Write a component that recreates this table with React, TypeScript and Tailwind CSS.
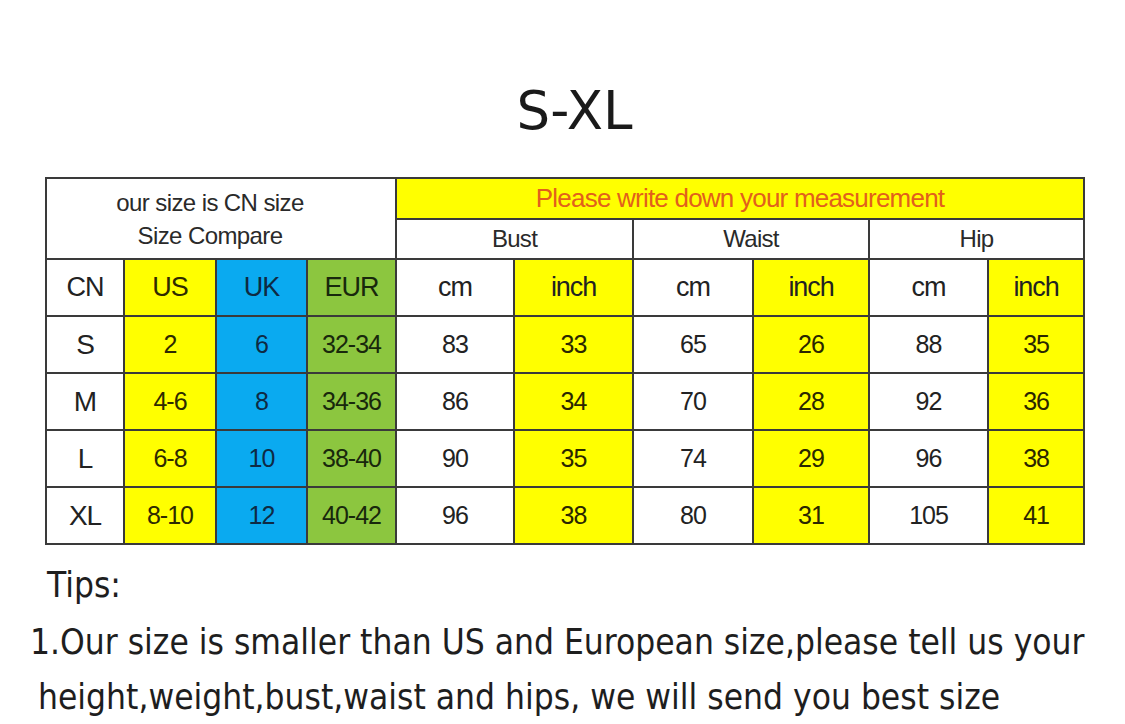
const sizeRows = [
  { cn: "S", us: "2", uk: "6", eur: "32-34", values: ["83", "33", "65", "26", "88", "35"] },
  { cn: "M", us: "4-6", uk: "8", eur: "34-36", values: ["86", "34", "70", "28", "92", "36"] },
  { cn: "L", us: "6-8", uk: "10", eur: "38-40", values: ["90", "35", "74", "29", "96", "38"] },
  { cn: "XL", us: "8-10", uk: "12", eur: "40-42", values: ["96", "38", "80", "31", "105", "41"] },
];

const colWidths = [78, 92, 91, 89, 118, 119, 120, 116, 119, 96];

const cell = "border-2 border-[#3a3a3a] p-0 text-center align-middle";

export default function App() {
  return (
    <div className="min-h-screen w-[1125px] bg-white text-[#222]">
      <h1
        className="pt-[81px] pl-[24px] text-center text-[53px] leading-[60px] font-normal text-[#1a1a1a]"
        style={{ fontFamily: '"DejaVu Sans", sans-serif' }}
      >
        S-XL
      </h1>

      <div className="ml-[45px] mt-[36px]" style={{ fontFamily: '"Liberation Sans", Arial, sans-serif' }}>
        <table className="table-fixed border-collapse w-[1038px]">
          <colgroup>
            {colWidths.map((w, i) => (
              <col key={i} style={{ width: w }} />
            ))}
          </colgroup>
          <tbody>
            <tr className="h-[40px]">
              <td className={`${cell} bg-white`} colSpan={4} rowSpan={2}>
                <div className="pr-[22px] text-[24px] leading-[33px] tracking-[-0.025em] text-[#2a2a2a]">
                  <div>our size is CN size</div>
                  <div>Size Compare</div>
                </div>
              </td>
              <td className={`${cell} bg-[#ffff00] text-[26px] tracking-[-0.03em] text-[#e2601c]`} colSpan={6}>
                Please write down your measurement
              </td>
            </tr>
            <tr className="h-[40px]">
              {["Bust", "Waist", "Hip"].map((label) => (
                <td key={label} className={`${cell} bg-white text-[24px] tracking-[-0.03em] text-[#2a2a2a]`} colSpan={2}>
                  {label}
                </td>
              ))}
            </tr>
            <tr className="h-[57px] text-[27px] tracking-[-0.04em]">
              <td className={`${cell} bg-white`}>CN</td>
              <td className={`${cell} bg-[#ffff00] text-[#2e2a00]`}>US</td>
              <td className={`${cell} bg-[#0aaaf0] text-[#0e2a44]`}>UK</td>
              <td className={`${cell} bg-[#8cc63f] text-[#18280c]`}>EUR</td>
              {["cm", "inch", "cm", "inch", "cm", "inch"].map((u, i) => (
                <td key={i} className={`${cell} ${i % 2 ? "bg-[#ffff00]" : "bg-white"}`}>
                  {u}
                </td>
              ))}
            </tr>
            {sizeRows.map((row) => (
              <tr key={row.cn} className="h-[57px] text-[25px] tracking-[-0.04em]">
                <td className={`${cell} bg-white text-[28px]`}>{row.cn}</td>
                <td className={`${cell} bg-[#ffff00] text-[#2e2a00]`}>{row.us}</td>
                <td className={`${cell} bg-[#0aaaf0] text-[#0e2a44]`}>{row.uk}</td>
                <td className={`${cell} bg-[#8cc63f] text-[#18280c]`}>{row.eur}</td>
                {row.values.map((v, i) => (
                  <td key={i} className={`${cell} ${i % 2 ? "bg-[#ffff00] text-[#2a2600]" : "bg-white"}`}>
                    {v}
                  </td>
                ))}
              </tr>
            ))}
          </tbody>
        </table>
      </div>

      <div
        className="mt-[20px] text-[35px] text-[#1e1e1e]"
        style={{ fontFamily: '"DejaVu Sans Condensed", "DejaVu Sans", sans-serif' }}
      >
        <p className="pl-[47px] leading-[40px]">Tips:</p>
        <p className="pl-[30px] mt-[17px] leading-[40px] whitespace-nowrap">
          1.Our size is smaller than US and European size,please tell us your
        </p>
        <p className="pl-[38px] mt-[15px] leading-[40px] whitespace-nowrap">
          height,weight,bust,waist and hips, we will send you best size
        </p>
      </div>
    </div>
  );
}
